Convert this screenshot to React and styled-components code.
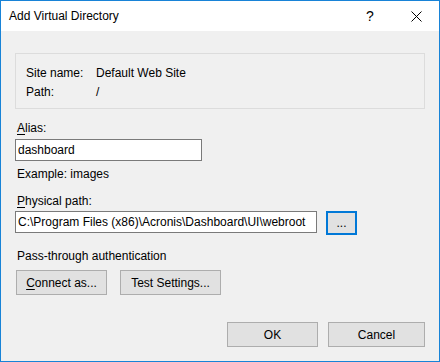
import React from "react";
import styled, { createGlobalStyle } from "styled-components";

const Global = createGlobalStyle`
  html, body { margin: 0; padding: 0; background: #ffffff; }
  body { font-family: "Liberation Sans", Arial, sans-serif; font-size: 12px; color: #000; }
  * { box-sizing: border-box; }
`;

const Window = styled.div`
  width: 440px;
  height: 362px;
  border: 1px solid #1883d7;
  display: flex;
  flex-direction: column;
  background: #f0f0f0;
`;

const TitleBar = styled.div`
  height: 30px;
  background: #ffffff;
  display: flex;
  align-items: center;
  padding-left: 8px;
`;

const Title = styled.div`
  flex: 1;
  font-size: 12px;
  color: #000;
`;

const TitleButton = styled.div`
  width: 46px;
  height: 30px;
  display: flex;
  align-items: center;
  justify-content: center;
  font-size: 14px;
  color: #000;
`;

const Client = styled.div`
  flex: 1;
  display: flex;
  flex-direction: column;
  padding: 22px 14px 14px 14px;
`;

const InfoBox = styled.div`
  border: 1px solid #dcdcdc;
  display: grid;
  grid-template-columns: 70px 1fr;
  grid-auto-rows: 19px;
  align-items: center;
  padding: 9px 10px 7px 10px;
`;

const Label = styled.div`
  line-height: 16px;
  margin-top: ${(p) => p.$mt || 0}px;
  padding-left: 2px;
`;

const Input = styled.div`
  height: 22px;
  width: ${(p) => p.$w}px;
  background: #fff;
  border: 1px solid #7a7a7a;
  display: flex;
  align-items: center;
  padding-left: 2px;
  margin-top: ${(p) => p.$mt || 0}px;
  white-space: nowrap;
  overflow: hidden;
`;

const Row = styled.div`
  display: flex;
  align-items: flex-start;
  gap: ${(p) => p.$gap || 0}px;
  margin-top: ${(p) => p.$mt || 0}px;
  justify-content: ${(p) => p.$justify || "flex-start"};
  padding-left: ${(p) => p.$pl || 0}px;
`;

const Button = styled.div`
  height: ${(p) => p.$h || 25}px;
  width: ${(p) => p.$w}px;
  background: #e1e1e1;
  border: ${(p) => (p.$focus ? "2px solid #0078d7" : "1px solid #adadad")};
  display: flex;
  align-items: center;
  justify-content: center;
  white-space: nowrap;
`;

const Spacer = styled.div`
  flex: 1;
`;

const U = styled.span`
  text-decoration: underline;
  text-underline-offset: 2px;
`;

export default function App() {
  return (
    <>
      <Global />
      <Window>
        <TitleBar>
          <Title>Add Virtual Directory</Title>
          <TitleButton>?</TitleButton>
          <TitleButton>
            <svg width="11" height="11" viewBox="0 0 11 11">
              <path d="M0.5 0.5 L10.5 10.5 M10.5 0.5 L0.5 10.5" stroke="#000" strokeWidth="1" />
            </svg>
          </TitleButton>
        </TitleBar>
        <Client>
          <InfoBox>
            <span>Site name:</span>
            <span>Default Web Site</span>
            <span>Path:</span>
            <span>/</span>
          </InfoBox>
          <Label $mt={11}>
            <U>A</U>lias:
          </Label>
          <Input $w={187} $mt={3}>dashboard</Input>
          <Label $mt={5}>Example: images</Label>
          <Label $mt={11}>
            <U>P</U>hysical path:
          </Label>
          <Row $mt={2} $gap={9}>
            <Input $w={302}>C:\Program Files (x86)\Acronis\Dashboard\UI\webroot</Input>
            <Button $w={31} $h={24} $focus>...</Button>
          </Row>
          <Label $mt={13}>Pass-through authentication</Label>
          <Row $mt={6} $gap={13} $pl={1}>
            <Button $w={91}>
              <span>
                <U>C</U>onnect as...
              </span>
            </Button>
            <Button $w={101}>Test Settings...</Button>
          </Row>
          <Spacer />
          <Row $gap={10} $justify="flex-end">
            <Button $w={91}>OK</Button>
            <Button $w={97}>Cancel</Button>
          </Row>
        </Client>
      </Window>
    </>
  );
}
